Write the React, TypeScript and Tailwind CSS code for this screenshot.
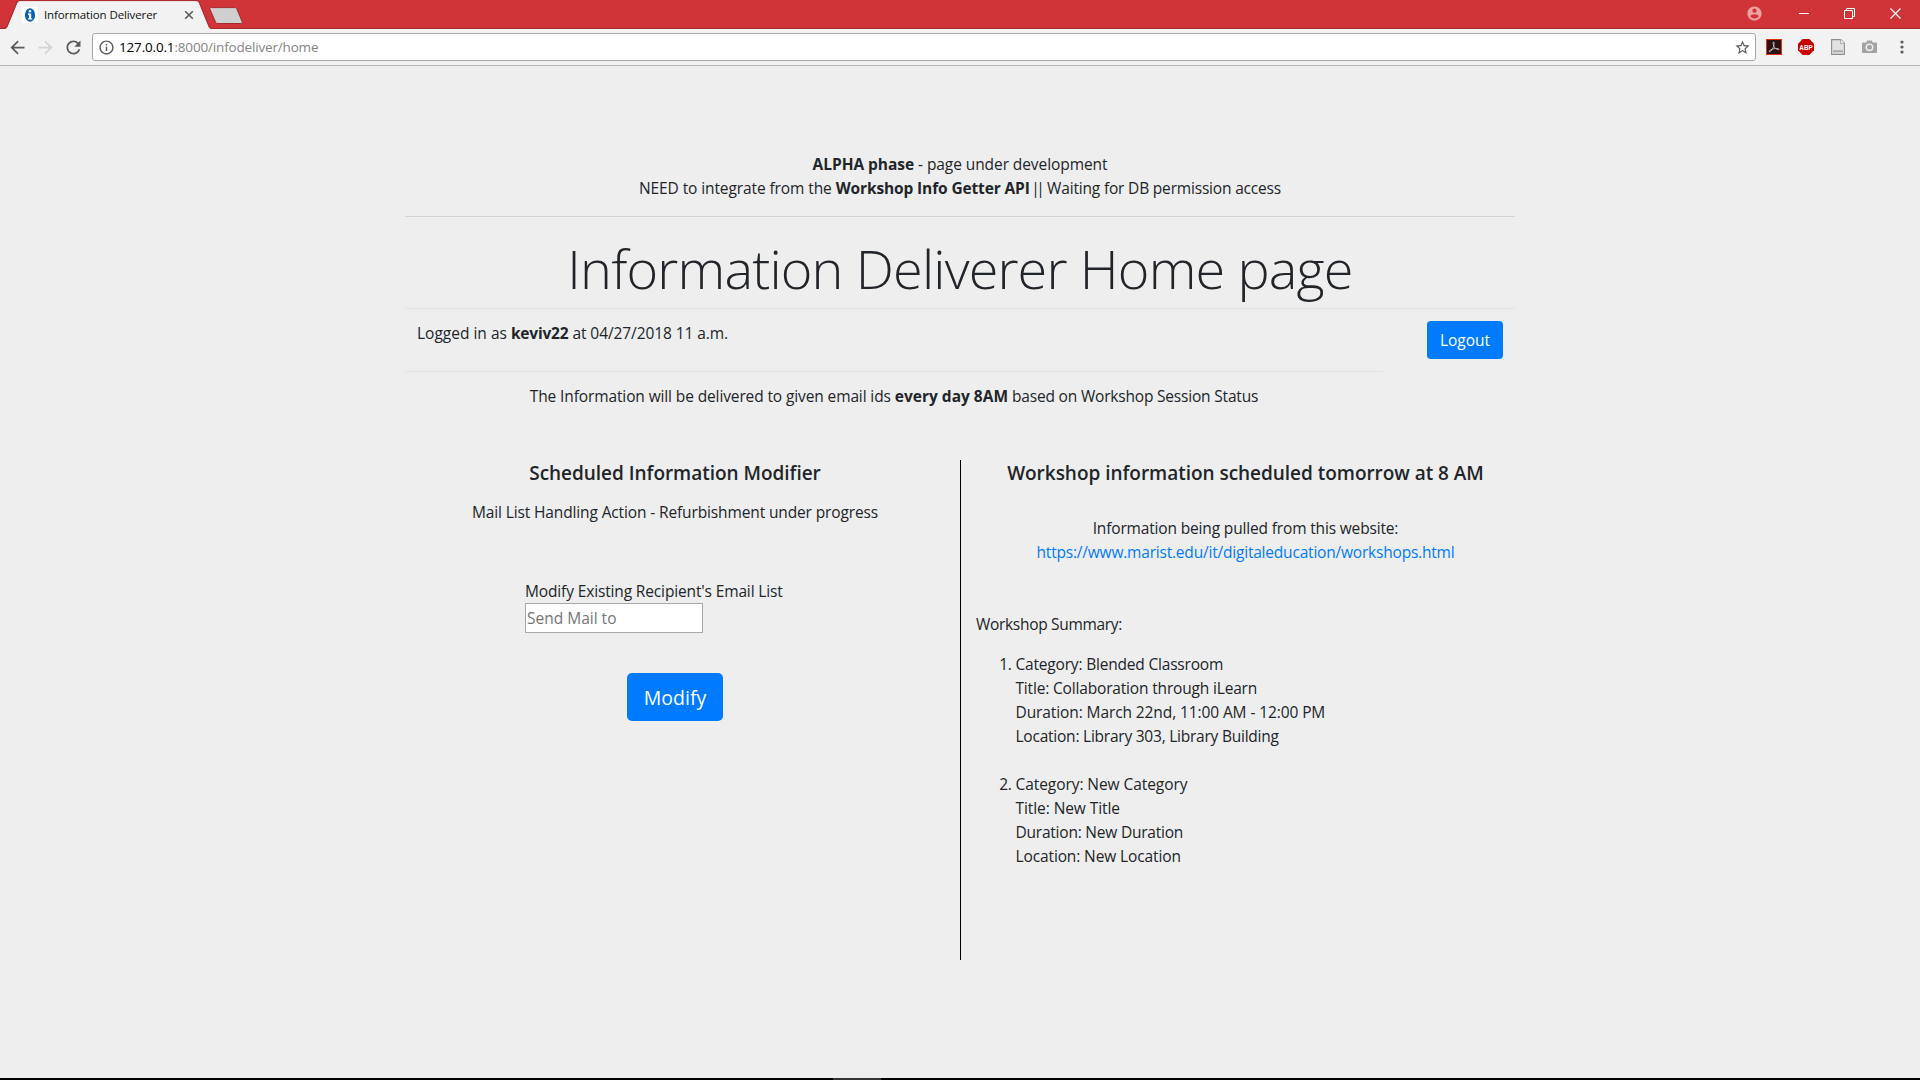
import type { ReactNode } from "react";

function Glyph({ d, className }: { d: string; className: string }) {
  return (
    <svg viewBox="0 0 24 24" fill="currentColor" className={`shrink-0 ${className}`}>
      <path d={d} />
    </svg>
  );
}

function Favicon() {
  return (
    <svg width="16" height="16" viewBox="0 0 16 16" className="shrink-0">
      <rect width="16" height="16" fill="#fff" />
      <ellipse cx="8" cy="8" rx="5.1" ry="6.7" fill="#0a62ae" />
      <circle cx="8" cy="4.2" r="1.3" fill="#fff" />
      <path d="M6 6.6h3.2v4.6h1v1.3H6v-1.3h1.1V7.9H6z" fill="#fff" />
    </svg>
  );
}

function TabStrip() {
  return (
    <div className="flex h-[29px] items-start border-b border-[#a3292d] bg-[#d13438]">
      <div className="relative h-[29px] w-[208px]">
        <svg width="215" height="29" viewBox="0 0 215 29" className="absolute left-0 top-0">
          <path
            d="M4.500 29 C6.500 28.600 7 28 7.800 26 L17 3.500 C17.700 1.800 18.300 1 20 1 H196 C198 1 198.500 1.800 199.200 3.500 L208.300 26 C209.100 28 209.600 28.600 211.500 29 Z"
            fill="#f2f2f2"
          />
          <path
            d="M4 28.500 C6 28.200 6.600 27.700 7.400 25.700 L16.600 3.200 C17.400 1.400 18 .6 20 .6 H196 C198.200 .6 198.900 1.500 199.600 3.200 L208.800 25.700 C209.600 27.700 210.100 28.300 212 28.500"
            fill="none"
            stroke="#a3292d"
            strokeWidth="0.9"
          />
        </svg>
        <div className="relative flex h-[29px] items-center pl-[22px]">
          <Favicon />
          <span className="ml-1.5 w-[140px] text-[11.5px] tracking-[-0.11px] text-[#111]">Information Deliverer</span>
          <svg width="10" height="10" viewBox="0 0 10 10" className="mt-px">
            <path d="M1.200 1.200 8.800 8.800M8.800 1.200 1.200 8.800" stroke="#5a5a5a" strokeWidth="1.600" />
          </svg>
        </div>
      </div>
      <svg width="36" height="18" viewBox="0 0 36 18" className="mt-[7px]">
        <path
          d="M3.200 .6 H26.700 C28 .6 28.500 1.100 29 2.400 L34 14.300 C34.500 15.900 34.200 16.500 32.700 16.500 H10 C8.500 16.500 8 16.200 7.400 14.800 L2.100 2.600 C1.500 1.200 1.800 .6 3.200 .6Z"
          fill="#cfcfcf"
          stroke="#a3292d"
          strokeWidth="1"
        />
      </svg>
      <div className="ml-auto flex h-[26px] items-center text-white">
        <Glyph
          className="mr-9 size-[17px] text-[#eda3a5]"
          d="M12 2C6.480 2 2 6.480 2 12s4.480 10 10 10 10-4.480 10-10S17.520 2 12 2zm0 3c1.660 0 3 1.340 3 3s-1.340 3-3 3-3-1.340-3-3 1.340-3 3-3zm0 14.200c-2.500 0-4.710-1.280-6-3.220.030-1.990 4-3.080 6-3.080 1.990 0 5.970 1.090 6 3.080-1.290 1.940-3.500 3.220-6 3.220z"
        />
        <span className="mr-[35px] h-px w-2.5 bg-white" />
        <svg width="11" height="11" viewBox="0 0 11 11" className="mr-[35px]" fill="none" stroke="#fff">
          <path d="M.5 2.500h8v8h-8zM2.500 2.500v-2h8v8h-2" />
        </svg>
        <svg width="11" height="11" viewBox="0 0 11 11" className="mr-[19px]" fill="none" stroke="#fff">
          <path d="M.5.5l10 10M10.500.5l-10 10" strokeWidth="1.200" />
        </svg>
      </div>
    </div>
  );
}

function Toolbar() {
  return (
    <div className="flex h-[37px] items-center border-b border-[#b4b4b4] bg-[#f2f2f2] text-[#5a5a5a]">
      <Glyph className="ml-[7px] size-[21px]" d="M20 11H7.830l5.590-5.590L12 4l-8 8 8 8 1.410-1.410L7.830 13H20v-2z" />
      <Glyph className="ml-[7px] size-[21px] text-[#d3d3d3]" d="M12 4l-1.410 1.410L16.170 11H4v2h12.170l-5.580 5.590L12 20l8-8z" />
      <Glyph
        className="ml-[7px] size-[21px]"
        d="M17.650 6.350C16.200 4.900 14.210 4 12 4c-4.420 0-7.990 3.580-7.990 8s3.570 8 7.990 8c3.730 0 6.840-2.550 7.730-6h-2.080c-.820 2.330-3.040 4-5.650 4-3.310 0-6-2.690-6-6s2.690-6 6-6c1.660 0 3.140.690 4.220 1.780L13 11h7V4l-2.350 2.350z"
      />
      <div className="ml-2 flex h-7 w-[1664px] items-center rounded-[3px] border border-[#a9a9a9] bg-white pl-[5px] pr-[4.500px]">
        <Glyph
          className="size-[17px]"
          d="M11 17h2v-6h-2v6zm1-15C6.480 2 2 6.480 2 12s4.480 10 10 10 10-4.480 10-10S17.520 2 12 2zm0 18c-4.410 0-8-3.590-8-8s3.590-8 8-8 8 3.590 8 8-3.590 8-8 8zM11 9h2V7h-2v2z"
        />
        <span className="ml-1 whitespace-nowrap text-[13.500px] leading-5 tracking-[-0.17px] text-[#858585]">
          <span className="text-black">127.0.0.1</span>:8000/infodeliver/home
        </span>
        <Glyph
          className="ml-auto size-[17px]"
          d="M22 9.240l-7.190-.620L12 2 9.190 8.630 2 9.240l5.460 4.730L5.820 21 12 17.270 18.180 21l-1.630-7.030L22 9.240zM12 15.400l-3.760 2.270 1-4.280-3.320-2.880 4.380-.380L12 6.100l1.710 4.040 4.380.380-3.320 2.880 1 4.280L12 15.400z"
        />
      </div>
      <svg width="16" height="16" viewBox="0 0 16 16" className="ml-2.5">
        <rect x=".5" y=".5" width="15" height="15" fill="#2a1214" stroke="#e2310f" />
        <path
          d="M3 12.400c.2-1.200 3-2.300 5.200-2.700 2-.4 4.600-.4 4.900.5.3 1.200-2.600.3-4.200-1.300C7.300 7.300 6.700 3.200 7.500 2.900c1-.2.700 3.300-.3 5.600-1 2.400-3.400 5.200-4.200 3.900z"
          fill="none"
          stroke="#c9c2c2"
          strokeWidth="0.900"
        />
      </svg>
      <svg width="16" height="16" viewBox="0 0 16 16" className="ml-4 overflow-visible">
        <path d="M4.700 0h6.600L16 4.700v6.600L11.300 16H4.700L0 11.300V4.700z" fill="#c70000" />
        <text x="8" y="10.900" textAnchor="middle" textLength="13.400" lengthAdjust="spacingAndGlyphs" fontFamily="Liberation Sans" fontWeight="700" fontSize="8" fill="#fff">
          ABP
        </text>
      </svg>
      <svg width="14" height="16" viewBox="0 0 14 16" className="ml-[17px]">
        <path d="M.6.6h9.200l3.600 3.600v11.200H.6z" fill="#e2e2e2" stroke="#8d8d8d" strokeWidth="1.100" />
        <path d="M9.600.6v3.800h3.800" fill="#fff" stroke="#a5a5a5" />
        <path d="M2 11.300h10v1.900H2z" fill="#a8a8a8" />
      </svg>
      <svg width="15" height="14" viewBox="0 0 15 14" className="ml-[17px]">
        <path d="M1 2.500h3.300L5.200.5h4.600l.9 2H14q1 0 1 1V12q0 1-1 1H1q-1 0-1-1V3.500q0-1 1-1z" fill="#a3a3a3" />
        <circle cx="7.500" cy="7.300" r="3.900" fill="#f2f2f2" />
        <circle cx="7.500" cy="7.300" r="2.500" fill="#a3a3a3" />
      </svg>
      <svg width="4" height="14" viewBox="0 0 4 14" className="ml-[23px]" fill="#5a5a5a">
        <circle cx="2" cy="2" r="1.600" />
        <circle cx="2" cy="7" r="1.600" />
        <circle cx="2" cy="12" r="1.600" />
      </svg>
    </div>
  );
}

function Workshop({ n, children }: { n: number; children: ReactNode }) {
  return (
    <li className="mb-6 flex">
      <span className="w-[39.500px] pr-1 text-right tracking-tight">{n}.</span>
      <div>{children}</div>
    </li>
  );
}

export default function App() {
  return (
    <div className="flex h-[1080px] w-[1920px] flex-col overflow-hidden bg-[#eee] font-['Open_Sans',sans-serif] text-[15.500px] leading-6 text-[#212529]">
      <TabStrip />
      <Toolbar />
      <main className="mx-auto w-[1110px] flex-1 whitespace-nowrap pt-[86px]">
        <div className="text-center">
          <p>
            <b className="tracking-[-0.05px]">ALPHA phase</b>{" "}
            <span className="tracking-[-0.08px]">- page under development</span>
          </p>
          <p>
            <span className="tracking-[-0.100px]">NEED to integrate from the</span>{" "}
            <b className="tracking-[-0.13px]">Workshop Info Getter API</b>{" "}
            <span className="-ml-[2.500px] mr-0.5 tracking-[-3.500px]">||</span>
            <span className="tracking-[-0.180px]"> Waiting for DB permission access</span>
          </p>
        </div>
        <hr className="mb-[18px] mt-4 border-[#d5d5d5]" />
        <h1 className="mb-1.5 h-[67px] text-center text-[54px] font-light leading-[67px] tracking-[-0.840px]">
          Information Deliverer Home page
        </h1>
        <hr className="border-[#dee2e6]" />

        <div className="flex h-[62px] items-start justify-between pl-3 pr-3 pt-3">
          <p>
            <span>Logged in as</span> <b className="tracking-[-0.200px]">keviv22</b>{" "}
            <span className="tracking-[-0.080px]">at 04/27/2018 11 a.m.</span>
          </p>
          <button className="h-[38px] w-[76px] rounded bg-[#007bff] text-white">Logout</button>
        </div>
        <div className="w-[978px] border-t border-[#dfe1e4] pt-3 text-center">
          <span className="tracking-[-0.120px]">The Information will be delivered to given email ids</span>{" "}
          <b>every day 8AM</b>{" "}
          <span className="tracking-[-0.190px]">based on Workshop Session Status</span>
        </div>

        <div className="mt-[52px] flex h-[500px]">
          <section className="mr-[15px] flex w-[540px] flex-col items-center">
            <h4 className="mt-px text-[19px] font-semibold tracking-[-0.030px]">Scheduled Information Modifier</h4>
            <p className="mt-[15px] tracking-[-0.130px]">Mail List Handling Action - Refurbishment under progress</p>
            <label className="mt-[55px] flex w-[300px] flex-col">
              <span className="h-6 tracking-[-0.140px]">Modify Existing Recipient's Email List</span>
              <input
                placeholder="Send Mail to"
                className="h-[30px] w-[178px] border border-[#a9a9a9] bg-white px-px placeholder:text-[#757575]"
              />
            </label>
            <button className="mt-10 h-12 w-24 rounded-[5px] bg-[#007bff] pt-0.5 text-[19.500px] text-white">Modify</button>
          </section>

          <section className="w-[555px] border-l border-black pl-[15px]">
            <div className="text-center">
              <h4 className="pt-px text-[19px] font-semibold tracking-[-0.030px]">
                Workshop information scheduled tomorrow at 8 AM
              </h4>
              <p className="mt-[31px] tracking-[-0.160px]">Information being pulled from this website:</p>
              <a className="tracking-[-0.200px] text-[#007bff]">https://www.marist.edu/it/digitaleducation/workshops.html</a>
            </div>
            <p className="mt-12 tracking-[-0.310px]">Workshop Summary:</p>
            <ol className="mt-4">
              <Workshop n={1}>
                <p className="tracking-[-0.190px]">Category: Blended Classroom</p>
                <p className="tracking-[-0.170px]">Title: Collaboration through iLearn</p>
                <p className="tracking-[-0.100px]">Duration: March 22nd, 11:00 AM - 12:00 PM</p>
                <p className="tracking-[-0.230px]">Location: Library 303, Library Building</p>
              </Workshop>
              <Workshop n={2}>
                <p className="tracking-[-0.070px]">Category: New Category</p>
                <p className="tracking-[-0.080px]">Title: New Title</p>
                <p className="tracking-[-0.220px]">Duration: New Duration</p>
                <p className="tracking-[-0.120px]">Location: New Location</p>
              </Workshop>
            </ol>
          </section>
        </div>
      </main>
      <footer className="h-0.5 bg-black pl-[833px]">
        <div className="h-0.5 w-12 bg-[#333]" />
      </footer>
    </div>
  );
}
